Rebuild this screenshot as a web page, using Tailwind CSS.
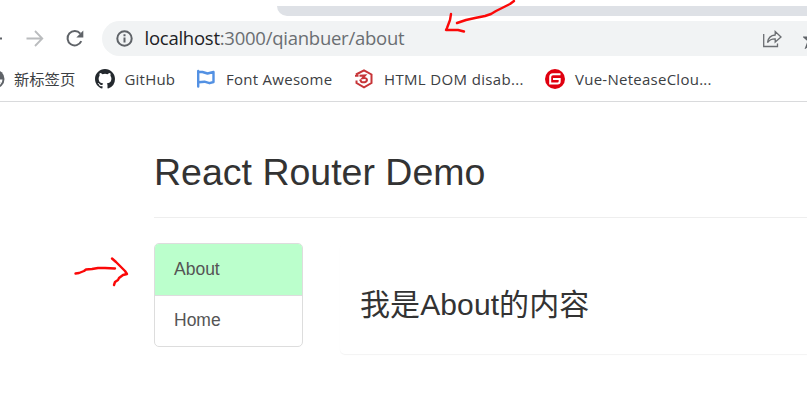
<!DOCTYPE html>
<html lang="zh-CN">
<head>
<meta charset="utf-8">
<title>React Router Demo</title>
<script src="https://cdn.jsdelivr.net/npm/@tailwindcss/browser@4"></script>
</head>
<body class="relative h-[413px] w-[807px] overflow-hidden bg-white font-['Liberation_Sans','Noto_Sans_CJK_SC',sans-serif] text-[#333]">
  <!-- Browser chrome -->
  <header class="h-[102px] border-b border-[#d9dadc] pt-[6px] font-['Open_Sans','Noto_Sans_CJK_SC',sans-serif]">
    <div class="ml-[277px] h-[10px] rounded-bl-[10px] bg-[#dee1e6]"></div>
    <div class="mt-[5px] flex h-[35px] items-center">
      <svg class="h-[20px] w-[102px] shrink-0" viewBox="0 0 102 20" fill="none">
        <path d="M-10 9.500H2" stroke="#5f6368" stroke-width="1.8"/>
        <path d="M26.500 9.500H42M35 2L42.300 9.500L35 17" stroke="#babcbe" stroke-width="1.800"/>
        <path d="M80.300 4.600A7.200 7.200 0 1 0 81.300 12.200" stroke="#5f6368" stroke-width="2"/>
        <path d="M83.300 1.500V8.400H76.300Z" fill="#5f6368"/>
      </svg>
      <div class="flex h-[35px] flex-1 items-center rounded-l-full bg-[#f1f3f4] pl-[14px]">
        <svg class="size-[17px] shrink-0" viewBox="0 0 17 17" fill="none" stroke="#5f6368" stroke-width="2"><circle cx="8.500" cy="8.500" r="7.200"/><path d="M8.500 7.500V12.500M8.500 4.300V6.200"/></svg>
        <div class="ml-[11.500px] w-[618.500px] shrink-0 pb-[2px] text-[18.500px] leading-[33px] tracking-[-0.250px] whitespace-nowrap text-[#6a6e72]"><span class="text-[#202124]">localhost</span>:3000/qianbuer/about</div>
        <svg class="-ml-[1px] h-[20px] w-[22px] shrink-0" viewBox="0 0 22 20" fill="none" stroke="#6b6e72" stroke-width="1.300"><path d="M1.700 5V17.500H15.500V14.500"/><path d="M5.500 13.500C6.200 8.500 9 6.200 13.200 6V2.500L19 8L13.200 13V9.800C9.500 9.700 7.300 11 5.500 13.500Z"/></svg>
        <svg class="ml-[19px] h-[20px] w-[20px] shrink-0" viewBox="0 0 20 20" fill="none" stroke="#5f6368" stroke-width="1.800"><path d="M9.500 1.500L11.800 7.500H18.500L13 12L15 18L9.500 14.500L3.200 18.300L5.500 12L1.500 8.300H7.200Z"/></svg>
      </div>
    </div>
    <nav class="relative flex h-[45px] items-center text-[15px] leading-[20px] text-[#3c4043]">
      <svg class="-ml-[15.500px] size-[20px] shrink-0" viewBox="0 0 20 20"><circle cx="10" cy="10" r="9.500" fill="#5f6368"/><path d="M14 10.500L17.500 10.500Q17.500 14 14.500 16.500L15.300 13L14 12Z" fill="white"/></svg>
      <span class="ml-[9.500px] w-[80px] shrink-0 text-[15.300px] whitespace-nowrap">新标签页</span>
      <svg class="ml-[1px] size-[20px] shrink-0" viewBox="0 0 16 16" fill="#24292e"><path d="M8 0C3.580 0 0 3.580 0 8c0 3.540 2.290 6.530 5.470 7.590.4.070.55-.17.55-.38 0-.19-.01-.82-.01-1.490-2.010.37-2.530-.49-2.690-.94-.09-.23-.48-.94-.82-1.130-.28-.15-.68-.52-.01-.53.63-.01 1.080.58 1.230.82.72 1.210 1.870.87 2.330.66.07-.52.28-.87.51-1.070-1.780-.2-3.640-.89-3.640-3.950 0-.87.31-1.590.82-2.150-.08-.2-.36-1.020.08-2.120 0 0 .67-.21 2.200.82a7.600 7.600 0 0 1 4 0c1.530-1.040 2.200-.82 2.200-.82.44 1.100.16 1.920.08 2.120.51.56.82 1.270.82 2.150 0 3.070-1.870 3.750-3.650 3.950.29.25.54.73.54 1.480 0 1.070-.01 1.930-.01 2.200 0 .21.15.46.55.38A8 8 0 0 0 16 8c0-4.420-3.580-8-8-8Z"/></svg>
      <span class="ml-[9.500px] w-[71.500px] shrink-0 tracking-[0.200px] whitespace-nowrap">GitHub</span>
      <svg class="h-[20px] w-[20px] shrink-0" viewBox="0 0 20 20" fill="none" stroke="#5391e3" stroke-width="2.400" stroke-linecap="round" stroke-linejoin="round"><path d="M2.200 2V17.500M2.500 3H6.500L11.500 4.500L17.500 3V13L13.500 14.200L8.500 12.700L2.500 13.200"/></svg>
      <span class="ml-[10px] w-[129px] shrink-0 tracking-[0.270px] whitespace-nowrap">Font Awesome</span>
      <svg class="size-[20px] shrink-0" viewBox="0 0 20 20" fill="none" stroke="#c73538" stroke-width="2"><path d="M1 5.500L9 1.300L16.500 5.500V14L9 18.300L1.500 14V11.500"/><path d="M0 6.800H3.500M4.500 6.800L10 6.500L7.500 9.300Q12 8.500 12 11Q11.500 14 6.500 13L5 10.500"/></svg>
      <span class="ml-[9px] w-[162px] shrink-0 tracking-[0.350px] whitespace-nowrap">HTML DOM disab...</span>
      <svg class="-ml-[1px] size-[20px] shrink-0" viewBox="0 0 20 20" fill="none"><circle cx="10" cy="10" r="10" fill="#e0000f"/><path d="M15.500 5.200H8Q5.200 5.200 5.200 8V14.500H12.500Q14.700 14.500 14.700 12.300V10H8" stroke="white" stroke-width="2"/></svg>
      <span class="ml-[10px] shrink-0 tracking-[0.260px] whitespace-nowrap">Vue-NeteaseClou...</span>
    </nav>
  </header>

  <main class="ml-[154px] pt-[48px]">
    <h2 class="h-[68px] border-b border-[#eee] text-[37.500px] leading-[44px]">React Router Demo</h2>
    <div class="mt-[25px] flex items-start">
      <nav class="h-[104px] w-[149px] shrink-0 overflow-hidden rounded-[5px] border border-[#ddd] text-[17.500px] leading-[25px] text-[#555]">
        <a class="block h-[52px] border-b border-[#ddd] bg-[#bbffcc] pt-[13px] pl-[19px]">About</a>
        <a class="block h-[50px] pt-[12px] pl-[19px]">Home</a>
      </nav>
      <section class="ml-[37px] h-[111px] flex-1 rounded-l-[5px] pt-[45px] pl-[20px] shadow-[0_1px_1px_rgba(0,0,0,0.05)]">
        <h3 class="text-[30px] leading-[34px] tracking-[0.100px] whitespace-nowrap">我是About的内容</h3>
      </section>
    </div>
  </main>

  <!-- Hand-drawn arrows over the page -->
  <svg class="pointer-events-none absolute inset-0 h-[413px] w-[807px]" viewBox="0 0 807 413" fill="none" stroke="#fb0808" stroke-width="2.400" stroke-linecap="round" stroke-linejoin="round">
    <path d="M514 1L510 4L502 8L496 11L491 14L485 16L475 18L466 20L460 22L457 23"/>
    <path d="M451 14L450 20L447 28L446 30L451 30L458 30L464 31.500"/>
    <path d="M75.500 273.500L79 273L84 271L86 269.500L92 269L98 268L105 268L115 268.500"/>
    <path d="M112 258.500L116 262L120 266L125 271L127 274L123 275L119 278L118 280L115 282L114 285"/>
  </svg>
</body>
</html>
